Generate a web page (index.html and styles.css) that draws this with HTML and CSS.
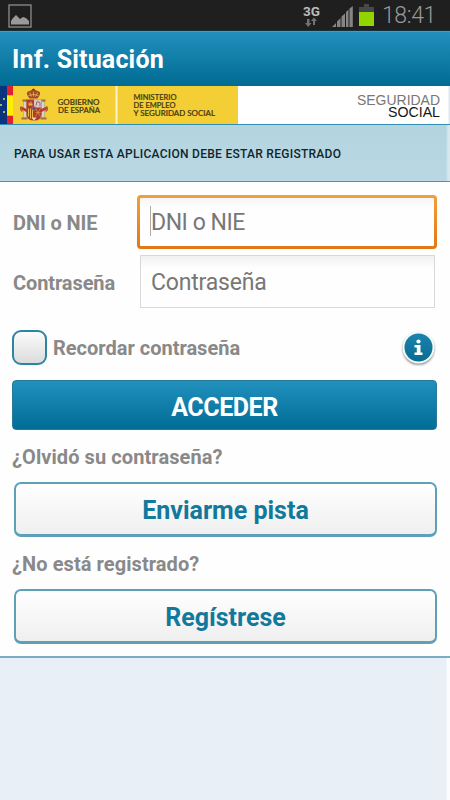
FILE: index.html
```
<!DOCTYPE html>
<html lang="es">
<head>
<meta charset="utf-8">
<title>Inf. Situación</title>
<link rel="stylesheet" href="styles.css">
</head>
<body>
<div class="status">
  <svg class="picture" width="24" height="24" viewBox="0 0 24 24"><rect x="1" y="1" width="22" height="22" fill="none" stroke="#858585" stroke-width="1.4"/><path d="M3 20.500V17L5 14l3-3 4 4 3-2 3 1 3 3v3.500z" fill="#999"/></svg>
  <div class="indicators">
    <svg width="18" height="24" viewBox="0 0 18 24"><text x="0" y="12" class="network" textLength="17" lengthAdjust="spacingAndGlyphs">3G</text><path d="M4 15h2.500v4H8.500L5.200 23 2 19h2zM10 21v-4H8l3-3.500L14 17h-2v4z" fill="#737373"/></svg>
    <svg class="signal" width="21" height="21" viewBox="0 0 21 21"><path d="M0 21l4-4v4zM5 21v-5.500l3.500-3.500v9zM9.500 21v-10.500L13 7.500V21zM14 21V6l2.500-2.500V21zM17.500 21V2.500L20.800 0v21z" fill="#858585"/></svg>
    <svg class="battery" width="15" height="22" viewBox="0 0 15 22"><path d="M5 0h5v3h5v5H0V3h5z" fill="#484848"/><path d="M0 8h15v14H0z" fill="#92d400"/></svg>
    <span class="clock">18:41</span>
  </div>
</div>
<header class="title"><h1>Inf. Situación</h1></header>
<div class="brand">
  <svg width="450" height="38" viewBox="0 0 450 38">
    <rect width="450" height="38" fill="#fff"/>
    <rect width="238" height="38" fill="#f3cf35"/>
    <rect width="7" height="38" fill="#0b347e"/>
    <path d="M7 0h6v9.500H7zM7 29.500h6V38H7z" fill="#e21f2c"/><path d="M7 9.500h6v20H7z" fill="#ffed00"/>
    <g fill="#f6d94b"><circle cx="4" cy="13" r="1"/><circle cx="1" cy="19" r="1"/><circle cx="4" cy="26" r="1"/></g>
    <rect x="115.500" width="2" height="38" fill="#fff4c8"/>
    <g transform="translate(0.500 2.500)">
      <path d="M27 7q-2-4 2-4.500 4-2.500 8 0 4 .5 2 4.500l-2 3h-8z" fill="#a14c29"/>
      <path d="M28 7q5-2 10 0M33 2v6M29 4l2 4M37 4l-2 4" fill="none" stroke="#e8b84a" stroke-width=".8"/>
      <path d="M33 0v3M31.500 1h3" stroke="#82412f"/>
      <path d="M23 13h3v16h-3zM41 13h3v16h-3z" fill="#d4d6ca" stroke="#8c8d79" stroke-width=".4"/>
      <path d="M22 11h5v2h-5zM40 11h5v2h-5zM21 29h6v2h-6zM40 29h6v2h-6z" fill="#a67134"/>
      <path d="M21 18l6 3v3l-6-3zM46 18l-6 3v3l6-3z" fill="#bb3a31"/>
      <path d="M21 18q-2 3 1 5M46 18q2 3-1 5" stroke="#b84a35" stroke-width="1.500" fill="none"/>
      <path d="M26 11h15v15q0 6-7.500 6T26 26z" fill="#b13834"/>
      <path d="M33.500 11H41v8h-7.500z" fill="#d8c9c5"/><path d="M35.500 17l1-4 3 1v4" fill="none" stroke="#93637d"/>
      <path d="M28 17v-3h1v1h1v-2h1v2h1v2z" fill="#e4b541"/>
      <path d="M28 20v8M30 20v10M32 20v10" stroke="#e8b841"/>
      <path d="M35 20l5 8M40 20l-5 8M35 24h5" stroke="#d7a23d" stroke-width=".7"/>
      <circle cx="33.500" cy="20" r="2" fill="#49568a" stroke="#cc6755" stroke-width=".8"/>
      <path d="M31 29h5l-2.500 3z" fill="#eee0bd"/>
    </g>
    <g class="ministry"><text x="57.500" y="19" textLength="42" lengthAdjust="spacingAndGlyphs">GOBIERNO</text><text x="58" y="27.300" textLength="42" lengthAdjust="spacingAndGlyphs">DE ESPAÑA</text></g>
    <g class="ministry small"><text x="133.500" y="14" textLength="43" lengthAdjust="spacingAndGlyphs">MINISTERIO</text><text x="133.500" y="21.500" textLength="42" lengthAdjust="spacingAndGlyphs">DE EMPLEO</text><text x="133.500" y="29.500" textLength="81.500" lengthAdjust="spacingAndGlyphs">Y SEGURIDAD SOCIAL</text></g>
    <g class="social"><text x="357" y="19" fill="#777" textLength="83" lengthAdjust="spacingAndGlyphs">SEGURIDAD</text><text x="388" y="31" fill="#151515" textLength="52" lengthAdjust="spacingAndGlyphs">SOCIAL</text></g>
    <rect x="448.500" width="1.500" height="38" fill="#dfe7ed"/>
  </svg>
</div>
<div class="notice"><span>PARA USAR ESTA APLICACION DEBE ESTAR REGISTRADO</span></div>
<main>
  <div class="field first"><label class="dni">DNI o NIE</label><div class="input active"><i class="caret"></i><span>DNI o NIE</span></div></div>
  <div class="field second"><label>Contraseña</label><div class="input"><span>Contraseña</span></div></div>
  <div class="remember"><i class="checkbox"></i><span>Recordar contraseña</span>
    <svg class="info" width="36" height="38" viewBox="0 0 36 38"><defs><filter id="shadow" x="-20%" y="-20%" width="140%" height="150%"><feGaussianBlur stdDeviation="1.200"/></filter><linearGradient id="disc" x2="0" y2="1"><stop stop-color="#1c83ad"/><stop offset="1" stop-color="#096b91"/></linearGradient></defs><circle cx="17.500" cy="19" r="15.800" fill="#555" opacity=".7" filter="url(#shadow)"/><circle cx="17.500" cy="17.500" r="16" fill="#f2fafc"/><circle cx="17.500" cy="17.500" r="14" fill="url(#disc)"/><circle cx="17.500" cy="11.500" r="2.100" fill="#fff"/><path d="M13.500 15h6v7.500h2V25h-8v-2.500h2.300v-5h-2.300z" fill="#fff"/></svg>
  </div>
  <div class="button primary"><span>ACCEDER</span></div>
  <p class="forgot">¿Olvidó su contraseña?</p>
  <div class="button outline"><span class="hint">Enviarme pista</span></div>
  <p class="unregistered">¿No está registrado?</p>
  <div class="button outline"><span class="register">Regístrese</span></div>
</main>
<div class="footer"></div>
</body>
</html>
```
FILE: styles.css
```
* { box-sizing: border-box; }
body { margin: 0; width: 450px; height: 800px; overflow: hidden; background: #fefefe; font-family: Roboto, sans-serif; display: flex; flex-direction: column; }
svg { display: block; flex: none; }
.status { height: 31px; flex: none; background: #1f1f1f; border-bottom: 1px solid #14313c; display: flex; justify-content: space-between; padding: 4px 15px 0 8px; }
.indicators { display: flex; }
.network { font: bold 13px Roboto, sans-serif; fill: #bcbcbc; }
.signal { margin: 2px 0 0 11px; }
.battery { margin-left: 6px; }
.clock { width: 53px; margin-left: 8px; color: #989898; font-size: 23px; line-height: 24px; font-weight: 300; letter-spacing: -.4px; white-space: nowrap; }
.title { height: 55px; flex: none; padding: 2px 12px 0; background: linear-gradient(#228fbd, #006c93); border-top: 1px solid #3ba0c4; display: flex; align-items: center; }
h1 { margin: 0; color: #fff; font-size: 25px; line-height: 30px; font-weight: 700; letter-spacing: .18px; }
.brand { height: 39px; flex: none; border-bottom: 1px solid #348eaf; }
.ministry { font: 500 7.800px Lato, sans-serif; fill: #443913; stroke: #443913; stroke-width: .2px; }
.small { font-size: 7.500px; }
.social { font: 15px "Liberation Sans", sans-serif; }
.notice { height: 57px; flex: none; padding: 2px 14px 0; background: linear-gradient(90deg, transparent 446px, #d6e8ee 448px), linear-gradient(#b3d5df, #bad7e3); border-bottom: 1px solid #5093ad; display: flex; align-items: center; color: #10252d; font-size: 12px; font-weight: 500; letter-spacing: .28px; white-space: nowrap; }
main { height: 475px; flex: none; padding: 13px 13px 0; display: flex; flex-direction: column; color: #898989; font-size: 20px; font-weight: 700; }
.field { display: flex; align-items: center; flex: none; }
.first { height: 54px; }
.second { height: 53px; margin-top: 6px; }
label { width: 127px; flex: none; white-space: nowrap; letter-spacing: -.1px; padding-top: 2px; }
.field.first label { width: 124px; }
.input { width: 295px; height: 53px; padding: 2px 10px 0; border: 1px solid #d8d8d8; background: linear-gradient(#f1f1f1, #fefefe 12px); color: #777; font-size: 23px; font-weight: 400; letter-spacing: -.2px; display: flex; align-items: center; }
.active { width: 300px; height: 54px; padding: 0 0 0 10px; border: 3px solid transparent; border-radius: 4px; background: linear-gradient(#f6f6f6, #fefefe 10px) padding-box, linear-gradient(#f0a03a, #e07816) border-box; letter-spacing: -.45px; }
.caret { width: 1px; height: 30px; background: #aaa; margin-top: -2px; }
.remember { margin-top: 21px; height: 38px; display: flex; align-items: center; flex: none; }
.checkbox { width: 35px; height: 35px; margin: -1px 6px 0 -1px; border: 2px solid #2b86a2; border-radius: 9px; background: linear-gradient(#fbfbfb, #dcdcdc); }
.info { margin: 1px 0 -1px auto; }
.button { flex: none; display: flex; align-items: center; justify-content: center; font-size: 25px; font-weight: 700; }
.primary { height: 50px; margin: 13px 0 0 -1px; border: 1px solid #28799a; border-radius: 4px; background: linear-gradient(#2290bd, #006d96); color: #fff; padding-top: 5px; letter-spacing: -.45px; }
p { margin: 0 0 0 -1px; flex: none; line-height: 24px; letter-spacing: .08px; }
.forgot { margin-top: 15px; }
.unregistered { margin-top: 15px; }
.outline { height: 55px; margin: 13px 0 0 1px; border: 2px solid #5da0b7; border-bottom-width: 3px; border-radius: 7px; background: linear-gradient(#fff, #efefef); color: #11799c; padding-top: 3px; }
.footer { flex: 1; margin-top: -1px; border-top: 2px solid #79adc4; background: linear-gradient(90deg, #e8eff7 446px, #fafcfe 447px); }
```
